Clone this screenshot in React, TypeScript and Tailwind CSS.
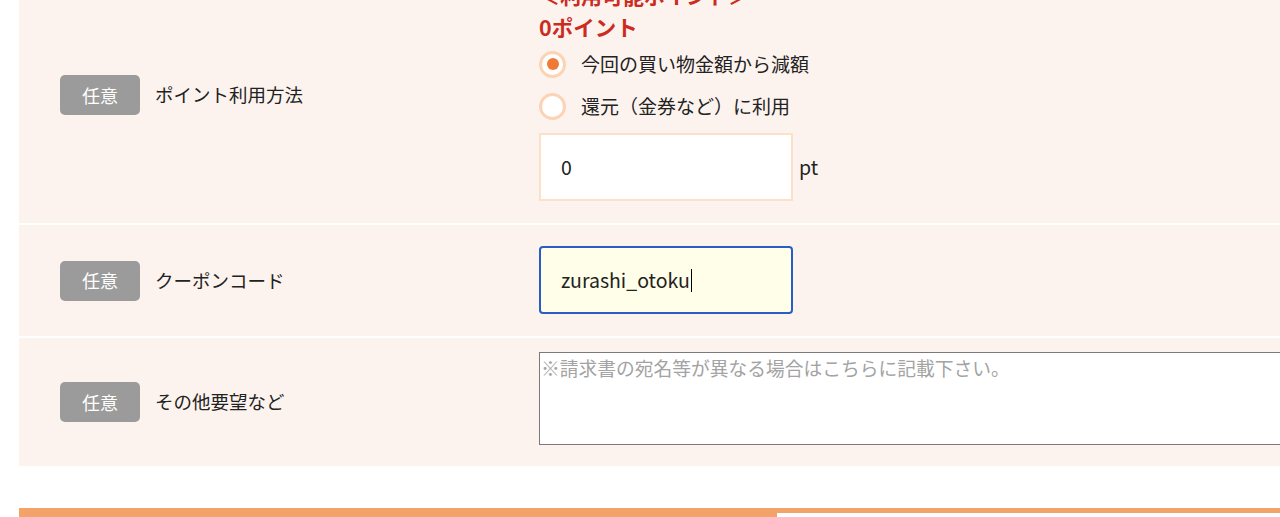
const jp = '"Noto Sans CJK JP", "Noto Sans", sans-serif';

const Badge = () => (
  <span className="inline-flex h-[40px] w-[80px] items-center justify-center rounded-[5px] bg-[#9b9b9b] text-[18px] text-white">
    任意
  </span>
);

const RowLabel = ({ label }: { label: string }) => (
  <div className="flex w-[520px] shrink-0 items-center gap-[15px] pl-[41px]">
    <Badge />
    <span className="text-[18.5px] text-[#222]">{label}</span>
  </div>
);

const Radio = ({ checked, label }: { checked?: boolean; label: string }) => (
  <label className="flex h-[42px] items-center gap-[15px]">
    <span className="flex h-[27px] w-[27px] items-center justify-center rounded-full border-[3px] border-[#fcd3b4] bg-white">
      {checked && <span className="h-[12px] w-[12px] rounded-full bg-[#f07a35]" />}
    </span>
    <span className="text-[19px] text-[#222]">{label}</span>
  </label>
);

export default function App() {
  return (
    <div className="h-[517px] w-[1280px] overflow-hidden bg-white" style={{ fontFamily: jp }}>
      <div className="ml-[19px] mt-[-33px] w-[1320px] bg-[#fdf3ee]">
        {/* ポイント利用方法 */}
        <div className="flex border-b-2 border-white">
          <RowLabel label="ポイント利用方法" />
          <div className="flex flex-col pb-[22px] pt-[13px]">
            <p className="text-[21px] font-bold leading-[30px] text-[#cc2b1f]">＜利用可能ポイント＞</p>
            <p className="text-[21.5px] font-bold leading-[33px] text-[#cc2b1f]">0ポイント</p>
            <Radio checked label="今回の買い物金額から減額" />
            <Radio label="還元（金券など）に利用" />
            <div className="mt-[6px] flex items-center gap-[6px]">
              <div className="flex h-[68px] w-[254px] items-center border-2 border-[#fde0c8] bg-white pl-[20px] text-[19.5px] text-[#222]">
                0
              </div>
              <span className="text-[19.5px] text-[#222]">pt</span>
            </div>
          </div>
        </div>

        {/* クーポンコード */}
        <div className="flex border-b-2 border-white">
          <RowLabel label="クーポンコード" />
          <div className="pb-[22px] pt-[21px]">
            <div className="flex h-[68px] w-[254px] items-center rounded-[4px] border-2 border-[#2b5cc6] bg-[#fefee9] pl-[20px] text-[19.5px] text-[#222]">
              zurashi_otoku
              <span className="ml-[1px] h-[23px] w-[1px] bg-black" />
            </div>
          </div>
        </div>

        {/* その他要望など */}
        <div className="flex">
          <RowLabel label="その他要望など" />
          <div className="pb-[21px] pt-[14px]">
            <textarea
              className="block h-[93px] w-[780px] resize-none border border-[#7a7a7a] bg-white px-px py-[2px] text-[18.75px] leading-[26px] placeholder:text-[#a3a3a3]"
              placeholder="※請求書の宛名等が異なる場合はこちらに記載下さい。"
            />
          </div>
        </div>
      </div>

      <div className="mt-[42px] ml-[19px] flex h-[9px]">
        <div className="w-[758px] bg-[#f3a36a]" />
        <div className="flex-1 border-t-[5px] border-[#f3a36a] bg-white" />
      </div>
    </div>
  );
}
